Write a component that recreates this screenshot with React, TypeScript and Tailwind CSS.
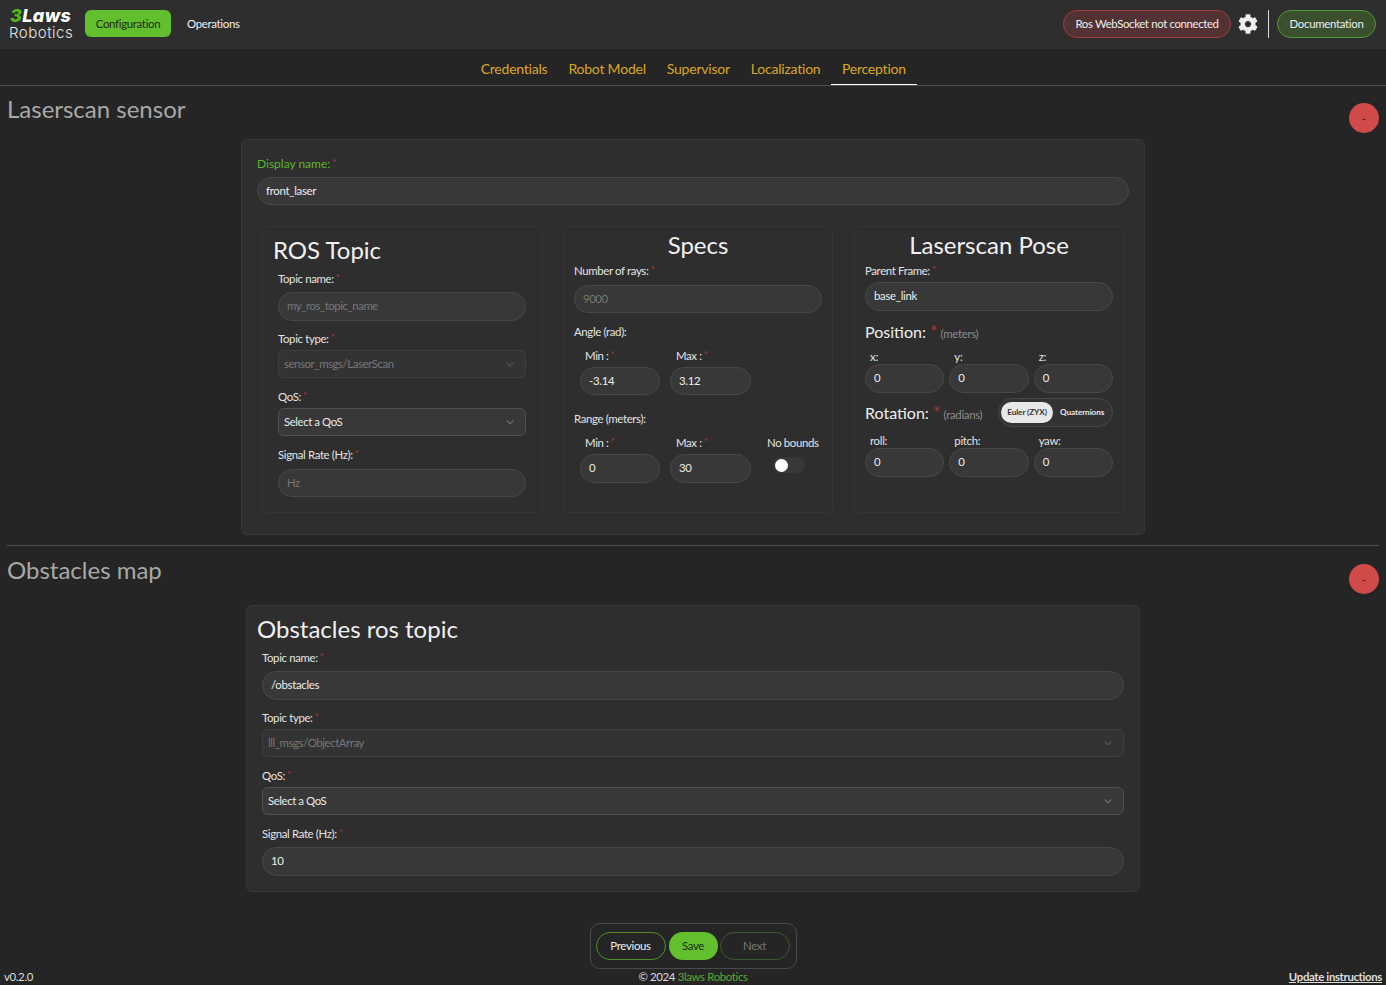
import React from "react";
import { FaCog } from "react-icons/fa";

const Star = () => <span className="relative top-[1px] text-[#a83a3a] ml-[2px] text-[10px] tracking-normal align-top leading-none">*</span>;

function Label({ children, cls = "", req = true }: { children: React.ReactNode; cls?: string; req?: boolean }) {
  return (
    <div className={"text-[11.4px] tracking-[-0.35px] leading-[16px] text-[#e4e4e4] whitespace-nowrap " + cls}>
      {children}
      {req && <Star />}
    </div>
  );
}

function Field({ value, placeholder, cls = "" }: { value?: string; placeholder?: string; cls?: string }) {
  return (
    <div className={"rounded-full border border-[#484848] bg-[#383838] px-[8px] pb-[1px] flex items-center text-[11.4px] " + (value ? "tracking-[-0.3px] text-[#ededed] " : "tracking-[-0.45px] text-[#777777] ") + cls}>
      {value ?? placeholder}
    </div>
  );
}

function Select({ value, disabled, cls = "" }: { value: string; disabled?: boolean; cls?: string }) {
  return (
    <div className={"h-[28px] rounded-md border flex items-center justify-between pl-[5px] pr-[9px] text-[11.4px] tracking-[-0.42px] " + (disabled ? "border-[#3f3f3f] bg-[#333333] text-[#777777] " : "border-[#505050] bg-[#383838] text-[#e8e8e8] ") + cls}>
      <span>{value}</span>
      <svg width="12" height="12" viewBox="0 0 20 20" fill="none" stroke={disabled ? "#545861" : "#6b7280"} strokeWidth="1.8" strokeLinecap="round" strokeLinejoin="round">
        <path d="M5 8l5 5 5-5" />
      </svg>
    </div>
  );
}

function RemoveBtn() {
  return (
    <div className="w-[30px] h-[30px] rounded-full bg-[#d04a4a] flex items-center justify-center text-[11px] text-[#222222] leading-none shrink-0">-</div>
  );
}

function Xyz({ labels }: { labels: string[] }) {
  return (
    <div className="flex gap-[5px]">
      {labels.map((l) => (
        <div key={l} className="flex-1">
          <div className="text-[11.4px] tracking-[-0.3px] leading-[15px] text-[#e4e4e4] pl-[5px]">{l}:</div>
          <Field value="0" cls="h-[29px]" />
        </div>
      ))}
    </div>
  );
}

export default function App() {
  return (
    <div className="relative h-[985px] overflow-hidden bg-[#252525] text-white" style={{ fontFamily: "Lato, sans-serif" }}>
      <header className="h-[49px] bg-[#2e2e2e] flex items-center pl-[9px] pr-[10px] pb-[2px]">
        <div className="w-[64px] leading-none">
          <div className="text-[18px] leading-[16px] font-extrabold italic tracking-[0.4px] ml-[1px] whitespace-nowrap" style={{ fontFamily: "Inter, sans-serif" }}>
            <span className="text-[#4fb81c]">3</span>Laws
          </div>
          <div className="text-[15px] leading-[15px] text-[#e4e4e4] font-light tracking-[0.5px] mt-[1px]" style={{ fontFamily: "Inter, sans-serif" }}>Robotics</div>
        </div>
        <div className="ml-[12px] h-[27px] w-[86px] rounded-md bg-[#62c02f] text-[#1f2a14] text-[11.4px] tracking-[-0.3px] flex items-center justify-center">Configuration</div>
        <div className="ml-[16px] text-[11.4px] tracking-[-0.3px] text-[#eeeeee]">Operations</div>
        <div className="ml-auto h-[28px] w-[168px] rounded-full border border-[#a33c3c] bg-[#523232] text-[11.4px] tracking-[-0.36px] text-[#eeeeee] flex items-center justify-center">Ros WebSocket not connected</div>
        <FaCog className="ml-[7px] text-[#f0f0f0]" size={20} />
        <div className="ml-[10px] w-[1px] h-[28px] bg-[#dddddd]" />
        <div className="ml-[8px] h-[28px] w-[99px] rounded-full border border-[#529a2c] bg-[#3a4f2e] text-[11.4px] tracking-[-0.3px] text-[#eeeeee] flex items-center justify-center">Documentation</div>
      </header>

      <nav className="h-[37px] border-b border-[#4e4e4e] flex items-stretch justify-center text-sm tracking-[-0.22px] text-[#dba724] pl-[1px]">
        <div className="px-[10.5px] pt-[4px] flex items-center">Credentials</div>
        <div className="px-[10.5px] pt-[4px] flex items-center">Robot Model</div>
        <div className="px-[10.5px] pt-[4px] flex items-center">Supervisor</div>
        <div className="px-[10.5px] pt-[4px] flex items-center">Localization</div>
        <div className="px-[11px] pt-[4px] flex items-center border-b border-white">Perception</div>
      </nav>

      <section className="px-[7px]">
        <div className="flex justify-between h-[53px]">
          <h2 className="text-2xl leading-[32px] text-[#a8a8a8] pt-[7px] h-[40px]">Laserscan sensor</h2>
          <div className="pt-[17px]"><RemoveBtn /></div>
        </div>

        <div className="mx-auto w-[904px] h-[396px] rounded-md border border-[#383838] bg-[#2e2e2e] px-[15px] pt-[16px]">
          <div className="text-xs leading-[16px] text-[#5fb52f]">Display name:<Star /></div>
          <Field value="front_laser" cls="mt-[5px] h-[28px]" />
          <div className="flex mt-[21px] ml-[5px] gap-[21px]">
            <div className="w-[281px] h-[287px] rounded-md border border-[#363636] pl-[10px] pr-[11px] shrink-0">
              <h3 className="text-2xl leading-[32px] text-[#f0f0f0] mt-[7px]">ROS Topic</h3>
              <div className="pl-[5px] pr-[5px]">
                <Label cls="mt-[5px]">Topic name:</Label>
                <Field placeholder="my_ros_topic_name" cls="mt-[5px] h-[29px]" />
                <Label cls="mt-[10px]">Topic type:</Label>
                <Select value="sensor_msgs/LaserScan" disabled cls="mt-[3px]" />
                <Label cls="mt-[11px]">QoS:</Label>
                <Select value="Select a QoS" cls="mt-[3px]" />
                <Label cls="mt-[11px]">Signal Rate (Hz):</Label>
                <Field placeholder="Hz" cls="mt-[6px] h-[28px]" />
              </div>
            </div>
            <div className="w-[269px] h-[287px] rounded-md border border-[#363636] pl-[9px] pr-[10px] shrink-0">
              <h3 className="text-2xl leading-[32px] text-[#f0f0f0] text-center mt-[2px]">Specs</h3>
              <Label cls="mt-[2px]">Number of rays:</Label>
              <Field placeholder="9000" cls="mt-[6px] h-[28px]" />
              <Label req={false} cls="mt-[11px]">Angle (rad):</Label>
              <div className="flex gap-[10px] ml-[6px] mt-[8px]">
                <div className="w-[80px]"><Label cls="pl-[5px] mb-[3px]">Min :</Label><Field value="-3.14" cls="h-[28px]" /></div>
                <div className="w-[81px]"><Label cls="pl-[6px] mb-[3px]">Max :</Label><Field value="3.12" cls="h-[28px]" /></div>
              </div>
              <Label req={false} cls="mt-[16px]">Range (meters):</Label>
              <div className="flex gap-[10px] ml-[6px] mt-[8px]">
                <div className="w-[80px]"><Label cls="pl-[5px] mb-[3px]">Min :</Label><Field value="0" cls="h-[29px]" /></div>
                <div className="w-[81px]"><Label cls="pl-[6px] mb-[3px]">Max :</Label><Field value="30" cls="h-[29px]" /></div>
                <div className="ml-[6px]">
                  <Label req={false}>No bounds</Label>
                  <div className="ml-[6px] mt-[6px] w-[32px] h-[16px] rounded-full bg-[#383838] flex items-center pl-[2px]">
                    <div className="w-[13px] h-[13px] rounded-full bg-white" />
                  </div>
                </div>
              </div>
            </div>
            <div className="w-[270px] h-[287px] rounded-md border border-[#363636] px-[10px] shrink-0">
              <h3 className="text-2xl leading-[32px] text-[#f0f0f0] text-center mt-[2px]">Laserscan Pose</h3>
              <Label cls="mt-[2px]">Parent Frame:</Label>
              <Field value="base_link" cls="mt-[3px] h-[29px]" />
              <div className="mt-[9px] leading-[20px] h-[20px] whitespace-nowrap">
                <span className="text-base text-[#eeeeee]">Position:</span>
                <span className="text-[#a83a3a] text-lg leading-[20px] ml-[4px]">*</span>
                <span className="text-[11.4px] tracking-[-0.3px] text-[#8c8c8c] ml-[3px]">(meters)</span>
              </div>
              <div className="mt-[9px]"><Xyz labels={["x", "y", "z"]} /></div>
              <div className="flex items-center justify-between mt-[5px] h-[29px]">
                <div className="whitespace-nowrap">
                  <span className="text-base text-[#eeeeee]">Rotation:</span>
                  <span className="text-[#a83a3a] text-lg leading-[20px] ml-[4px]">*</span>
                  <span className="text-[11.4px] tracking-[-0.3px] text-[#8c8c8c] ml-[3px]">(radians)</span>
                </div>
                <div className="w-[115px] h-[29px] rounded-full border border-[#484848] bg-[#333333] flex items-center pl-[2px] text-[8.2px] tracking-[-0.1px] font-bold">
                  <div className="w-[52px] h-[21px] rounded-full bg-[#e8e8e8] text-[#333333] flex items-center justify-center">Euler (ZYX)</div>
                  <div className="ml-[7px] text-[#e8e8e8]">Quaternions</div>
                </div>
              </div>
              <div className="mt-[6px]"><Xyz labels={["roll", "pitch", "yaw"]} /></div>
            </div>
          </div>
        </div>
      </section>

      <section className="px-[7px]">
        <div className="border-t border-[#4e4e4e] mt-[10px] flex justify-between h-[60px]">
          <h2 className="text-2xl leading-[32px] text-[#a8a8a8] pt-[8px]">Obstacles map</h2>
          <div className="pt-[18px]"><RemoveBtn /></div>
        </div>
        <div className="mx-auto w-[894px] h-[287px] rounded-md border border-[#383838] bg-[#2e2e2e] px-[15px]">
          <h3 className="text-2xl leading-[32px] text-[#f0f0f0] -ml-[5px] mt-[7px]">Obstacles ros topic</h3>
          <Label cls="mt-[5px]">Topic name:</Label>
          <Field value="/obstacles" cls="mt-[5px] h-[29px]" />
          <Label cls="mt-[10px]">Topic type:</Label>
          <Select value="lll_msgs/ObjectArray" disabled cls="mt-[3px]" />
          <Label cls="mt-[11px]">QoS:</Label>
          <Select value="Select a QoS" cls="mt-[3px]" />
          <Label cls="mt-[11px]">Signal Rate (Hz):</Label>
          <Field value="10" cls="mt-[5px] h-[29px]" />
        </div>
      </section>

      <div className="mx-auto mt-[31px] w-[207px] h-[46px] rounded-[10px] border border-[#4a4a4a] flex items-center pl-[5px] text-[11.4px] tracking-[-0.3px]">
        <div className="w-[70px] h-[28px] rounded-full border border-[#4f8f2d] flex items-center justify-center text-[#eeeeee]">Previous</div>
        <div className="ml-[3px] w-[49px] h-[28px] rounded-full bg-[#62c02f] flex items-center justify-center text-[#1f2a14]">Save</div>
        <div className="ml-[2px] w-[70px] h-[28px] rounded-full border border-[#3b5a2b] flex items-center justify-center text-[#777777]">Next</div>
      </div>

      <footer className="flex justify-between items-center px-[4px] text-[11.4px] tracking-[-0.35px] text-[#dddddd] leading-[16px]">
        <span className="w-[100px]">v0.2.0</span>
        <span>© 2024 <span className="text-[#5fa535]">3laws Robotics</span></span>
        <span className="w-[100px] text-right font-bold underline whitespace-nowrap">Update instructions</span>
      </footer>
    </div>
  );
}
